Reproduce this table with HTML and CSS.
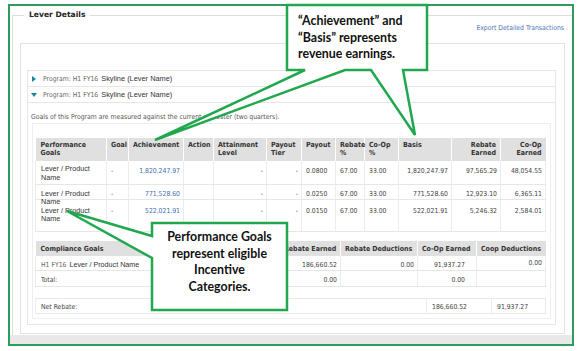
FILE: index.html
```html
<!DOCTYPE html>
<html>
<head>
<meta charset="utf-8">
<title>Lever Details</title>
<link rel="stylesheet" href="styles.css">
</head>
<body>
<div class="frame">
  <fieldset class="lever">
    <legend>Lever Details</legend>
    <div class="lever-body">
      <div class="export"><a class="export-link">Export Detailed Transactions</a></div>
      <div class="panel">
        <div class="programs">
          <div class="prog-row first"><span class="tri-right"></span><span class="prog-label">Program: H1 FY16</span><span class="prog-name">Skyline (Lever Name)</span></div>
          <div class="prog-row"><span class="tri-down"></span><span class="prog-label">Program: H1 FY16</span><span class="prog-name">Skyline (Lever Name)</span></div>
          <div class="prog-content">
            <p class="goals-note">Goals of this Program are measured against the current semester (two quarters).</p>
            <div class="tables-box">
              <table class="perf">
                <colgroup>
                  <col class="w71"><col class="w22"><col class="w55"><col class="w30"><col class="w53"><col class="w35"><col class="w34"><col class="w29"><col class="w34"><col class="w53"><col class="w49"><col class="w45">
                </colgroup>
                <thead>
                  <tr>
                    <th class="first-col">Performance<br>Goals</th>
                    <th>Goal</th>
                    <th>Achievement</th>
                    <th>Action</th>
                    <th>Attainment<br>Level</th>
                    <th>Payout<br>Tier</th>
                    <th>Payout</th>
                    <th>Rebate<br>%</th>
                    <th>Co-Op<br>%</th>
                    <th>Basis</th>
                    <th class="r">Rebate<br>Earned</th>
                    <th class="r">Co-Op<br>Earned</th>
                  </tr>
                </thead>
                <tbody>
                  <tr class="row1">
                    <td class="first-col name"><div class="nm">Lever / Product<br>Name</div></td>
                    <td>-</td>
                    <td class="r link">1,820,247.97</td>
                    <td></td>
                    <td class="r">-</td>
                    <td class="r">-</td>
                    <td>0.0800</td>
                    <td>67.00</td>
                    <td>33.00</td>
                    <td class="r">1,820,247.97</td>
                    <td class="r">97,565.29</td>
                    <td class="r">48,054.55</td>
                  </tr>
                  <tr class="row2">
                    <td class="first-col name"><div class="nm">Lever / Product<br>Name</div></td>
                    <td>-</td>
                    <td class="r link">771,528.60</td>
                    <td></td>
                    <td class="r">-</td>
                    <td class="r">-</td>
                    <td>0.0250</td>
                    <td>67.00</td>
                    <td>33.00</td>
                    <td class="r">771,528.60</td>
                    <td class="r">12,923.10</td>
                    <td class="r">6,365.11</td>
                  </tr>
                  <tr class="row3">
                    <td class="first-col name"><div class="nm">Lever / Product<br>Name</div></td>
                    <td>-</td>
                    <td class="r link">522,021.91</td>
                    <td></td>
                    <td class="r">-</td>
                    <td class="r">-</td>
                    <td>0.0150</td>
                    <td>67.00</td>
                    <td>33.00</td>
                    <td class="r">522,021.91</td>
                    <td class="r">5,246.32</td>
                    <td class="r">2,584.01</td>
                  </tr>
                </tbody>
              </table>

              <table class="comp">
                <colgroup>
                  <col class="w244"><col class="w61"><col class="w77"><col class="w59"><col class="w69">
                </colgroup>
                <thead>
                  <tr>
                    <th class="first-col">Compliance Goals</th>
                    <th>Rebate Earned</th>
                    <th>Rebate Deductions</th>
                    <th>Co-Op Earned</th>
                    <th>Coop Deductions</th>
                  </tr>
                </thead>
                <tbody>
                  <tr>
                    <td class="first-col"><span class="prog-label">H1 FY16</span> <span class="prog-name">Lever / Product Name</span></td>
                    <td class="r">186,660.52</td>
                    <td class="r">0.00</td>
                    <td class="r coop">91,937.27</td>
                    <td class="r hi">0.00</td>
                  </tr>
                  <tr>
                    <td class="first-col">Total:</td>
                    <td class="r">0.00</td>
                    <td class="r"></td>
                    <td class="r coop">0.00</td>
                    <td class="r"></td>
                  </tr>
                </tbody>
              </table>

              <table class="net">
                <colgroup>
                  <col class="w391"><col class="w65"><col class="w54">
                </colgroup>
                <tbody>
                  <tr>
                    <td class="first-col">Net Rebate:</td>
                    <td>186,660.52</td>
                    <td>91,937.27</td>
                  </tr>
                </tbody>
              </table>
            </div>
          </div>
        </div>
      </div>
    </div>
  </fieldset>
  <div class="strip"></div>
</div>

<svg class="callouts" width="578" height="351" viewBox="0 0 578 351" aria-hidden="true">
  <path class="bubble" d="M287,5 H427 V70 H403 L415,135 L371,70 H345 L155,140 L305,70 H287 Z"/>
  <path class="bubble" d="M152,223 H287 V310 H152 V258 L67,211 L152,236 Z"/>
</svg>
<div class="callout-text c1">“Achievement” and<br>“Basis” represents<br>revenue earnings.</div>
<div class="callout-text c2">Performance Goals<br>represent eligible<br>Incentive<br>Categories.</div>
</body>
</html>
```

FILE: styles.css
```css
html, body {
  margin: 0;
  padding: 0;
}
body {
  width: 578px;
  height: 351px;
  position: relative;
  overflow: hidden;
  background: #ffffff;
  font-family: "DejaVu Sans Condensed", "DejaVu Sans", sans-serif;
  font-stretch: condensed;
  color: #444;
}

.frame {
  margin: 4px 0 0 8px;
  width: 566px;
  height: 342px;
  box-sizing: border-box;
  border: 2px solid #2f9c5c;
  background: #fff;
  display: flex;
  flex-direction: column;
}

.lever {
  margin: 4px 0 0 2px;
  padding: 0;
  border: 1px solid #dddddd;
  border-right: 0;
  border-bottom: 0;
  flex: 1;
  min-width: 0;
  min-height: 0;
}
.lever legend {
  margin-left: 11px;
  padding: 0 5px;
  font-family: "DejaVu Sans", sans-serif;
  font-stretch: normal;
  font-weight: bold;
  font-size: 7.6px;
  line-height: 10px;
  color: #222;
}

.lever-body {
  padding: 0 7px;
}

.export {
  height: 9px;
  line-height: 9px;
  text-align: right;
  padding-right: 1px;
}
.export-link {
  font-size: 6.8px;
  color: #4a77b4;
}

.panel {
  margin-top: 14px;
  height: 291px;
  box-sizing: border-box;
  border: 1px solid #e2e2e2;
  padding: 26px 8px 0 6px;
}

.prog-row {
  height: 16px;
  box-sizing: border-box;
  border: 1px solid #e6e6e6;
  border-top: 0;
  display: flex;
  align-items: center;
  padding-left: 3px;
}
.prog-row.first {
  border-top: 1px solid #e6e6e6;
  height: 17px;
}
.tri-right {
  width: 0;
  height: 0;
  border-left: 4px solid #17899a;
  border-top: 3px solid transparent;
  border-bottom: 3px solid transparent;
  margin: 0 7px 0 1px;
}
.tri-down {
  width: 0;
  height: 0;
  border-top: 4px solid #17899a;
  border-left: 3px solid transparent;
  border-right: 3px solid transparent;
  margin: 0 6px 0 0;
}
.prog-label {
  font-size: 6.8px;
  color: #666;
  margin-right: 3px;
}
.prog-name {
  font-family: "Liberation Sans", Arial, sans-serif;
  font-size: 7.4px;
  color: #333;
}

.prog-content {
  border: 1px solid #e6e6e6;
  border-top: 0;
  padding: 10px 4px 5px 3px;
}
.goals-note {
  margin: 0;
  font-size: 6.8px;
  line-height: 9px;
  color: #555;
}

.tables-box {
  margin: 1px 0 0 1px;
  border: 1px solid #eeeeee;
  padding: 14px 4px 4px 2px;
}

table {
  width: 510px;
  table-layout: fixed;
  border-collapse: collapse;
  font-size: 6.8px;
  color: #444;
}
th, td {
  padding: 0 3px 0 4px;
  vertical-align: top;
  text-align: left;
  white-space: nowrap;
  overflow: visible;
}
th {
  background: #e0e0e0;
  color: #333;
  font-weight: bold;
  font-size: 7px;
  line-height: 8px;
  border-right: 1px solid #ffffff;
}
th:last-child { border-right: 0; }
td {
  line-height: 8px;
  border-right: 1px solid #ececec;
  border-bottom: 1px solid #e6e6e6;
}
td:first-child { border-left: 1px solid #ececec; }
.r { text-align: right; }
.first-col { padding-left: 5px; }
.link { color: #3f6fb2; }

.w71 { width: 71px; } .w22 { width: 22px; } .w55 { width: 55px; } .w30 { width: 30px; }
.w53 { width: 53px; } .w35 { width: 35px; } .w34 { width: 34px; } .w29 { width: 29px; }
.w49 { width: 49px; } .w45 { width: 45px; }
.w244 { width: 244px; } .w61 { width: 61px; } .w77 { width: 77px; } .w59 { width: 59px; } .w69 { width: 69px; }
.w391 { width: 391px; } .w65 { width: 65px; } .w54 { width: 54px; }

.perf thead tr { height: 23px; }
.perf th { padding-top: 3px; }
.perf th.r { padding-right: 4px; }
.perf .name { font-family: "Liberation Sans", Arial, sans-serif; font-size: 7.2px; color: #333; white-space: normal; }
.nm { height: 8px; line-height: 8.5px; }
.perf .row1 { height: 23px; }
.perf .row1 td { padding-top: 6px; }
.perf .row1 td.name { padding-top: 4px; }
.perf .row2 { height: 15px; }
.perf .row2 td { padding-top: 5px; box-sizing: border-box; }
.perf .row3 { height: 32px; }
.perf .row3 td { padding-top: 7px; }

.comp { margin-top: 9px; }
.comp thead tr { height: 15px; }
.comp th { padding-top: 4px; }
.comp tbody tr:first-child { height: 15px; }
.comp tbody tr:first-child td { padding-top: 5px; }
.comp tbody tr:first-child td.hi { padding-top: 3px; }
.comp tbody tr:last-child { height: 16px; }
.comp tbody tr:last-child td { padding-top: 5px; }
.comp .coop { padding-right: 11px; }
.comp .prog-name { font-size: 7.2px; }
.comp .prog-label { margin-right: 1px; }

.net { margin-top: 11px; border: 1px solid #e8e8e8; }
.net tr { height: 15px; }
.net td { padding-top: 4px; border-bottom: 0; padding-left: 5px; }
.net td:last-child { border-right: 0; }

.strip {
  height: 9px;
  background: #e8e8e8;
  flex: none;
}

.callouts {
  position: absolute;
  left: 0;
  top: 0;
}
.bubble {
  fill: #ffffff;
  stroke: #21a84e;
  stroke-width: 2.5;
  stroke-linejoin: miter;
}

.callout-text {
  position: absolute;
  font-family: "Lato", "Open Sans", sans-serif;
  font-stretch: normal;
  font-weight: bold;
  font-size: 12.4px;
  line-height: 16.5px;
  color: #111;
  white-space: nowrap;
}
.c1 {
  left: 298px;
  top: 13px;
}
.c2 {
  left: 152px;
  top: 229px;
  width: 135px;
  text-align: center;
}
```
